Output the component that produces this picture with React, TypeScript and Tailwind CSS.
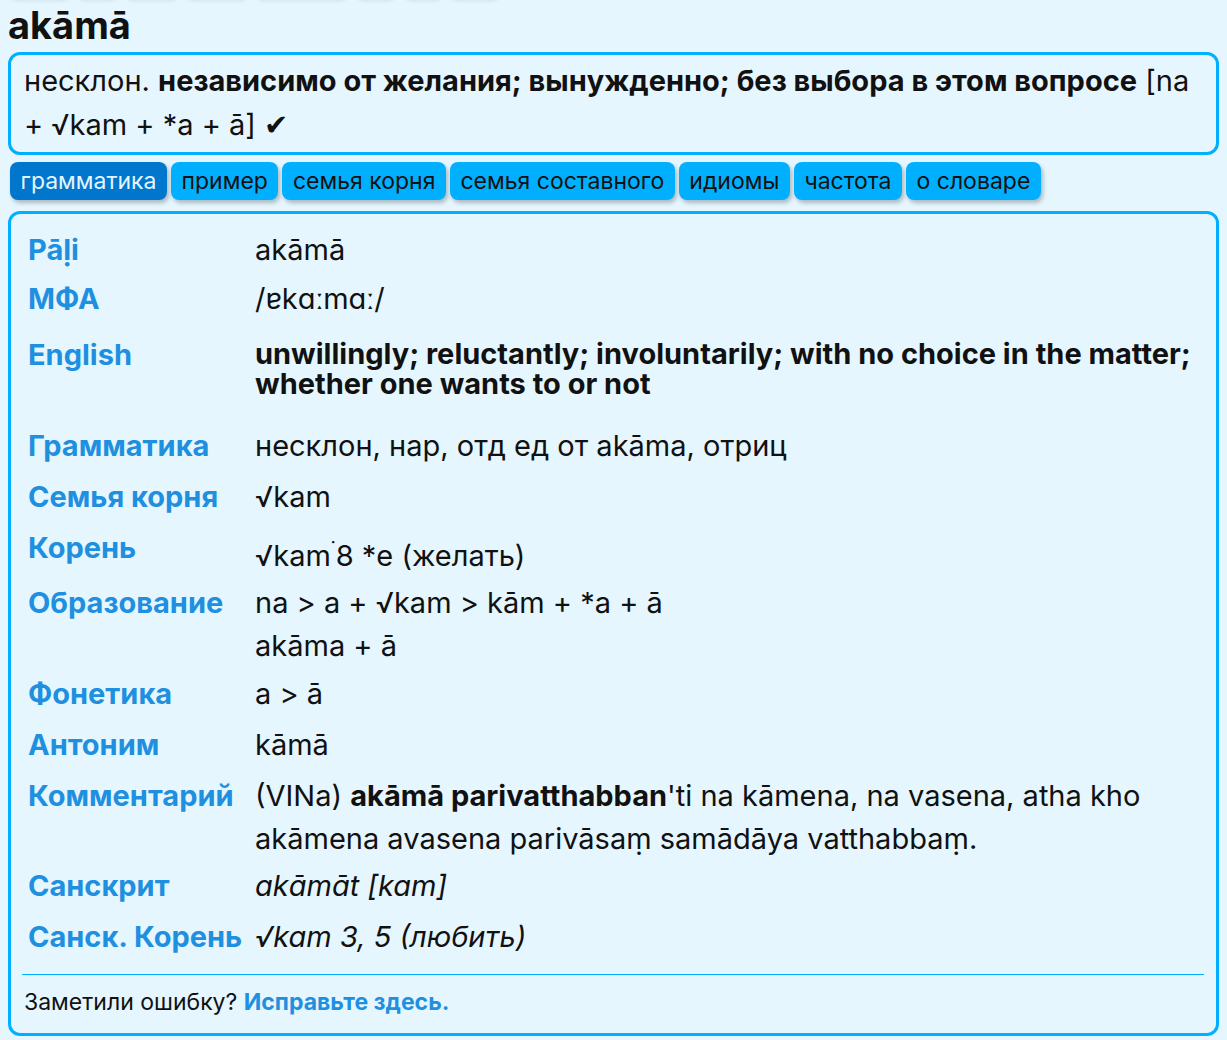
import React from "react";

const ghostTabs = [60, 40, 52, 62, 92, 40, 38, 50];

const tabs = [
  { id: "grammar", label: "грамматика", active: true },
  { id: "example", label: "пример" },
  { id: "root-family", label: "семья корня" },
  { id: "compound-family", label: "семья составного" },
  { id: "idioms", label: "идиомы" },
  { id: "frequency", label: "частота" },
  { id: "about", label: "о словаре" },
];

function Row({
  label,
  children,
  rowClass,
  valueClass = "",
}: {
  label: string;
  children: React.ReactNode;
  rowClass: string;
  valueClass?: string;
}) {
  return (
    <div className={"flex " + rowClass}>
      <div className="w-[227px] shrink-0 pt-[4px] font-bold text-[#1f8fe0] whitespace-nowrap">{label}</div>
      <div className={"flex-1 pt-[4px] " + valueClass}>{children}</div>
    </div>
  );
}

export default function App() {
  return (
    <div
      className="min-h-[1040px] bg-[#e5f6ff] text-[#111] px-2 overflow-hidden"
      style={{ fontFamily: "Inter, 'Noto Sans', sans-serif" }}
    >
      {/* tabs of the entry above, scrolled off */}
      <div className="flex gap-2 pl-[2px] -mt-[30px] h-[30px]">
        {ghostTabs.map((w, i) => (
          <div key={i} className="h-[30px] rounded-lg shadow-[0_2px_3px_rgba(0,0,0,0.06)]" style={{ width: w }} />
        ))}
      </div>

      <h1 className="text-[38px] font-bold leading-[46px] h-[52px] pt-[2px]">akāmā</h1>

      <div className="border-[3px] border-[#00b0ff] rounded-xl pl-[13px] pr-[10px] pt-[4px] pb-[5px] text-[29px] leading-[44px]">
        несклон. <b>независимо от желания; вынужденно; без выбора в этом вопросе</b> [na + √kam + *a + ā] ✔
      </div>

      <div className="flex gap-[4px] mt-[7px] ml-[2px]">
        {tabs.map((t) => (
          <button
            key={t.id}
            className={
              "h-[38px] px-[10.5px] rounded-lg text-[23px] shadow-[2px_3px_4px_rgba(0,0,0,0.25)] " +
              (t.active ? "bg-[#0077cc] text-[#e6f4ff]" : "bg-[#00b0ff] text-[#111]")
            }
          >
            {t.label}
          </button>
        ))}
      </div>

      <div className="mt-[11px] border-[3px] border-[#00b0ff] rounded-xl pl-[11px] pr-[12px] pt-[10px] pb-[16px]">
        <div className="pl-[6px] text-[29px] leading-[43px]">
          <Row label="Pāḷi" rowClass="h-[49px]">akāmā</Row>
          <Row label="МФА" rowClass="h-[56px]">/ɐkɑːmɑː/</Row>
          <Row label="English" rowClass="h-[91px]" valueClass="leading-[30px] font-bold !pt-[10px]">
            unwillingly; reluctantly; involuntarily; with no choice in the matter; whether one wants to or not
          </Row>
          <Row label="Грамматика" rowClass="h-[51px]">несклон, нар, отд ед от akāma, отриц</Row>
          <Row label="Семья корня" rowClass="h-[51px]">√kam</Row>
          <Row label="Корень" rowClass="h-[55px]" valueClass="!pt-[12px]">
            √kam<sup className="text-[20px]">˙</sup>8 *e (желать)
          </Row>
          <Row label="Образование" rowClass="h-[91px]">
            na &gt; a + √kam &gt; kām + *a + ā
            <br />
            akāma + ā
          </Row>
          <Row label="Фонетика" rowClass="h-[51px]">a &gt; ā</Row>
          <Row label="Антоним" rowClass="h-[51px]">kāmā</Row>
          <Row label="Комментарий" rowClass="h-[90px]">
            (VINa) <b>akāmā parivatthabban</b>'ti na kāmena, na vasena, atha kho akāmena avasena parivāsaṃ samādāya
            vatthabbaṃ.
          </Row>
          <Row label="Санскрит" rowClass="h-[51px]">
            <i>akāmāt [kam]</i>
          </Row>
          <Row label="Санск. Корень" rowClass="h-[51px]">
            <i>√kam 3, 5 (любить)</i>
          </Row>
        </div>

        <div className="border-t border-[#00b0ff] mt-[12px] pt-[12px] pl-[2px] text-[23px] leading-[30px]">
          Заметили ошибку? <a className="font-bold text-[#1f8fe0]">Исправьте здесь.</a>
        </div>
      </div>
    </div>
  );
}
